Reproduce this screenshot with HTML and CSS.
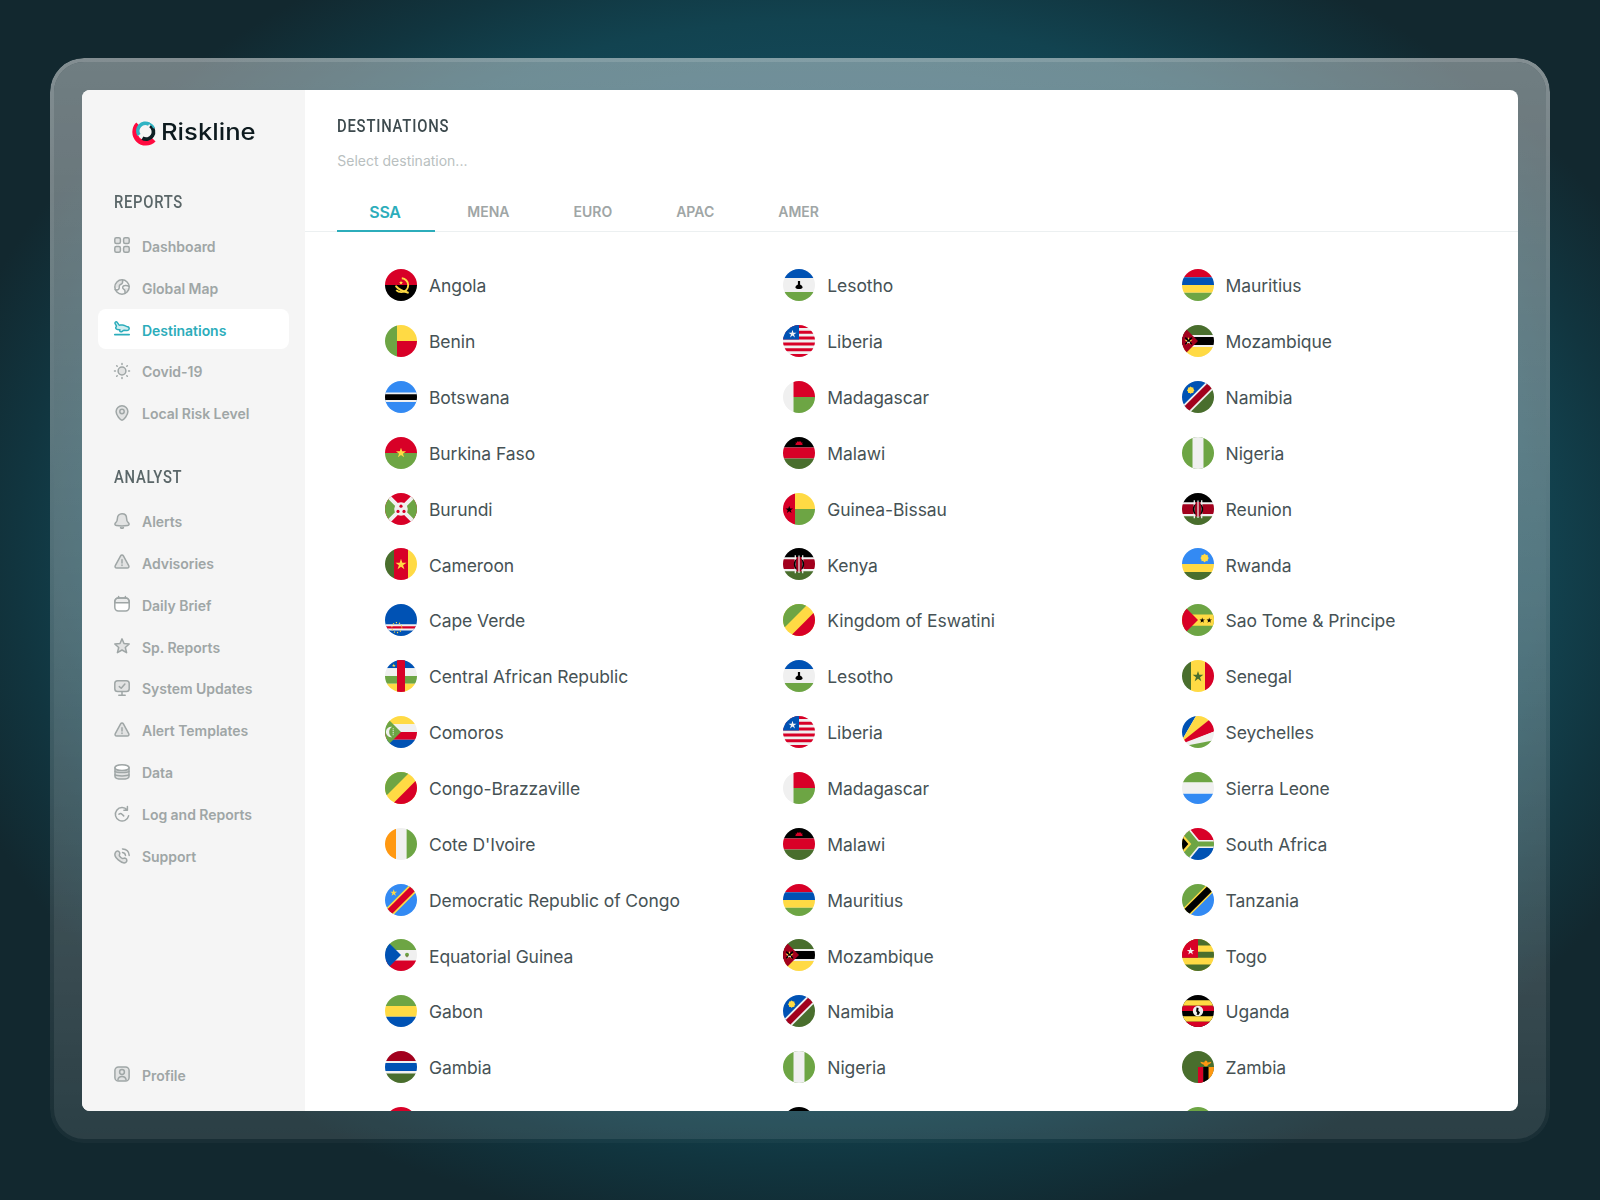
FILE: index.html
```html
<!DOCTYPE html>
<html lang="en">
<head>
<meta charset="utf-8">
<title>Riskline – Destinations</title>
<link rel="stylesheet" href="styles.css">
</head>
<body>
<svg class="sprite" width="0" height="0" aria-hidden="true">
  <defs>
    <polygon id="star" points="0,-1 .225,-.309 .951,-.309 .363,.118 .588,.809 0,.382 -.588,.809 -.363,.118 -.951,-.309 -.225,-.309"/>
    <g id="sun"><circle r=".78"/><path d="M0-1 .25-.6.7-.7.6-.25 1 0 .6.25.7.7.25.6 0 1-.25.6-.7.7-.6.25-1 0-.6-.25-.7-.7-.25-.6z"/></g>

    <symbol id="f-angola" viewBox="0 0 32 32"><path fill="#d80027" d="M0 0h32v16H0z"/><path fill="#000" d="M0 16h32v16H0z"/><g fill="none" stroke="#ffda44"><path stroke-width="1.900" d="M16.800 9.300c3.600.3 6.400 3.200 6.400 6.900 0 3.800-3 6.900-6.900 6.900-2 0-3.800-.7-5.100-2"/><path stroke-width="2.100" stroke-linecap="round" d="M11.200 17.300c2.500 3 6 4.600 11.600 6.300"/></g><use href="#star" fill="#ffda44" transform="translate(16 13.800) scale(2.200)"/></symbol>
    <symbol id="f-benin" viewBox="0 0 32 32"><path fill="#6da544" d="M0 0h12v32H0z"/><path fill="#ffda44" d="M12 0h20v16H12z"/><path fill="#d80027" d="M12 16h20v16H12z"/></symbol>
    <symbol id="f-botswana" viewBox="0 0 32 32"><path fill="#338af3" d="M0 0h32v32H0z"/><path fill="#f0f0f0" d="M0 11.400h32v9.600H0z"/><path fill="#000" d="M0 13.300h32v5.800H0z"/></symbol>
    <symbol id="f-burkina" viewBox="0 0 32 32"><path fill="#d80027" d="M0 0h32v16H0z"/><path fill="#6da544" d="M0 16h32v16H0z"/><use href="#star" fill="#ffda44" transform="translate(16 16) scale(5.300)"/></symbol>
    <symbol id="f-burundi" viewBox="0 0 32 32"><path fill="#d80027" d="M0 0h32v32H0z"/><path fill="#6da544" d="M0 0l16 16L0 32zM32 0L16 16l16 16z"/><path stroke="#f0f0f0" stroke-width="4" d="M0 0l32 32M32 0L0 32"/><circle cx="16" cy="16" r="6.800" fill="#f0f0f0"/><g fill="#d80027"><circle cx="16" cy="13.200" r="1.600"/><circle cx="13" cy="18.400" r="1.600"/><circle cx="19" cy="18.400" r="1.600"/></g></symbol>
    <symbol id="f-cameroon" viewBox="0 0 32 32"><path fill="#496e2d" d="M0 0h9v32H0z"/><path fill="#d80027" d="M9 0h14v32H9z"/><path fill="#ffda44" d="M23 0h9v32h-9z"/><use href="#star" fill="#ffda44" transform="translate(16 16.600) scale(5.800)"/></symbol>
    <symbol id="f-capeverde" viewBox="0 0 32 32"><path fill="#0052b4" d="M0 0h32v32H0z"/><path fill="#f0f0f0" d="M0 20.200h32v6.400H0z"/><path fill="#d80027" d="M0 22.200h32v2.300H0z"/><circle cx="11.800" cy="23.600" r="5" fill="none" stroke="#ffda44" stroke-width="1.200" stroke-dasharray="1.200 1.940"/></symbol>
    <symbol id="f-car" viewBox="0 0 32 32"><path fill="#0052b4" d="M0 0h32v8.300H0z"/><path fill="#f0f0f0" d="M0 8.300h32V16H0z"/><path fill="#6da544" d="M0 16h32v7.700H0z"/><path fill="#ffda44" d="M0 23.700h32V32H0z"/><path fill="#d80027" d="M12 0h8v32h-8z"/><use href="#star" fill="#ffda44" transform="translate(8.800 5.600) scale(2)"/></symbol>
    <symbol id="f-comoros" viewBox="0 0 32 32"><path fill="#ffda44" d="M0 0h32v8.300H0z"/><path fill="#f0f0f0" d="M0 8.300h32V16H0z"/><path fill="#d80027" d="M0 16h32v7.700H0z"/><path fill="#0052b4" d="M0 23.700h32V32H0z"/><path fill="#6da544" d="M0 0l16 16L0 32z"/><path fill="#f0f0f0" d="M7.200 10.800a5.300 5.300 0 1 0 0 10.400 6 6 0 0 1 0-10.400z"/><path stroke="#f0f0f0" stroke-dasharray="1 .8" d="M8.200 12.300v7.400"/></symbol>
    <symbol id="f-congo" viewBox="0 0 32 32"><path fill="#ffda44" d="M0 0h32v32H0z"/><path fill="#6da544" d="M0 0h25L0 25z"/><path fill="#d80027" d="M32 7.600V32H7.600z"/></symbol>
    <symbol id="f-cote" viewBox="0 0 32 32"><path fill="#ff9811" d="M0 0h11v32H0z"/><path fill="#f0f0f0" d="M11 0h10.600v32H11z"/><path fill="#6da544" d="M21.600 0H32v32H21.600z"/></symbol>
    <symbol id="f-drc" viewBox="0 0 32 32"><path fill="#338af3" d="M0 0h32v32H0z"/><path stroke="#ffda44" stroke-width="9.800" d="M-2 34.400L34.400-2"/><path stroke="#d80027" stroke-width="6.400" d="M-2 34.400L34.400-2"/><use href="#star" fill="#ffda44" transform="translate(8.700 8.800) scale(3.600)"/></symbol>
    <symbol id="f-eqguinea" viewBox="0 0 32 32"><path fill="#6da544" d="M0 0h32v11H0z"/><path fill="#f0f0f0" d="M0 11h32v10.600H0z"/><path fill="#d80027" d="M0 21.600h32V32H0z"/><path fill="#0052b4" d="M0 0l16 16L0 32z"/><circle cx="22" cy="15.700" r="2" fill="#6da544"/><path fill="#786145" d="M21.500 16h1v2.200h-1z"/></symbol>
    <symbol id="f-gabon" viewBox="0 0 32 32"><path fill="#6da544" d="M0 0h32v11H0z"/><path fill="#ffda44" d="M0 11h32v10.800H0z"/><path fill="#0052b4" d="M0 21.800h32V32H0z"/></symbol>
    <symbol id="f-gambia" viewBox="0 0 32 32"><path fill="#f0f0f0" d="M0 0h32v32H0z"/><path fill="#a2001d" d="M0 0h32v10H0z"/><path fill="#0052b4" d="M0 12.100h32v8H0z"/><path fill="#496e2d" d="M0 22.600h32V32H0z"/></symbol>
    <symbol id="f-lesotho" viewBox="0 0 32 32"><path fill="#f0f0f0" d="M0 0h32v32H0z"/><path fill="#0052b4" d="M0 0h32v9H0z"/><path fill="#6da544" d="M0 23h32v9H0z"/><path d="M14.900 12h2.200v3.600c1.600.8 2.500 1.800 2.500 3.100-1 1.700-6.200 1.700-7.200 0 0-1.300.9-2.300 2.500-3.100z"/></symbol>
    <symbol id="f-liberia" viewBox="0 0 32 32"><path fill="#f0f0f0" d="M0 0h32v32H0z"/><path fill="#d80027" d="M0 0h32v2.900H0zM0 5.800h32v2.900H0zM0 11.600h32v2.900H0zM0 17.500h32v2.900H0zM0 23.300h32v2.900H0zM0 29.100h32V32H0z"/><path fill="#0052b4" d="M0 0h16v14.600H0z"/><use href="#star" fill="#f0f0f0" transform="translate(9.500 9) scale(4.200)"/></symbol>
    <symbol id="f-madagascar" viewBox="0 0 32 32"><path fill="#f0f0f0" d="M0 0h10.500v32H0z"/><path fill="#d80027" d="M10.500 0H32v16H10.500z"/><path fill="#6da544" d="M10.500 16H32v16H10.500z"/></symbol>
    <symbol id="f-malawi" viewBox="0 0 32 32"><path d="M0 0h32v10.500H0z"/><path fill="#d80027" d="M0 10.500h32v11.100H0z"/><path fill="#496e2d" d="M0 21.600h32V32H0z"/><path fill="#d80027" d="M12 8l1-1-.6-1.400 1.500.2.300-1.600 1.200.8.700-1.300.7 1.300 1.200-.8.300 1.600 1.500-.2L19 7l1 1z"/></symbol>
    <symbol id="f-bissau" viewBox="0 0 32 32"><path fill="#d80027" d="M0 0h12v32H0z"/><path fill="#ffda44" d="M12 0h20v16H12z"/><path fill="#6da544" d="M12 16h20v16H12z"/><use href="#star" transform="translate(6.200 16.700) scale(4)"/></symbol>
    <symbol id="f-kenya" viewBox="0 0 32 32"><path fill="#f0f0f0" d="M0 0h32v32H0z"/><path d="M0 0h32v9.300H0z"/><path fill="#a2001d" d="M0 11.300h32v9.800H0z"/><path fill="#496e2d" d="M0 23.200h32V32H0z"/><path stroke="#f0f0f0" stroke-width="1.300" d="M12.300 7.200v18M19.700 7.200v18"/><path fill="#a2001d" d="M13.500 9h5v14.500h-5z"/><path d="M13.800 10.400c-4 2.600-4 8.900 0 11.600-1.600-4-1.600-8 0-11.600zM18.200 10.400c4 2.600 4 8.900 0 11.600 1.600-4 1.600-8 0-11.600z"/><path stroke="#f0f0f0" stroke-width="1.200" d="M16 7.500v17.500"/></symbol>
    <symbol id="f-mauritius" viewBox="0 0 32 32"><path fill="#d80027" d="M0 0h32v8.300H0z"/><path fill="#0052b4" d="M0 8.300h32V16H0z"/><path fill="#ffda44" d="M0 16h32v7.800H0z"/><path fill="#6da544" d="M0 23.800h32V32H0z"/></symbol>
    <symbol id="f-mozambique" viewBox="0 0 32 32"><path fill="#f0f0f0" d="M0 0h32v32H0z"/><path fill="#496e2d" d="M0 0h32v10H0z"/><path d="M0 12h32v8H0z"/><path fill="#ffda44" d="M0 22h32v10H0z"/><path fill="#a2001d" d="M0 0l16 16L0 32z"/><use href="#star" fill="#ffda44" transform="translate(6.500 16.200) scale(4.300)"/><path stroke="#000" stroke-width="1.500" d="M3.300 12.600l6.500 6.600M9.800 12.600l-6.500 6.600"/><path stroke="#f0f0f0" d="M5 17.300h3"/></symbol>
    <symbol id="f-namibia" viewBox="0 0 32 32"><path fill="#0052b4" d="M0 0h32L0 32z"/><path fill="#496e2d" d="M32 0v32H0z"/><path stroke="#f0f0f0" stroke-width="10" d="M-2 34.400L34.400-2"/><path stroke="#a2001d" stroke-width="6.400" d="M-2 34.400L34.400-2"/><use href="#sun" fill="#ffda44" transform="translate(8.700 9.200) scale(3.900)"/></symbol>
    <symbol id="f-nigeria" viewBox="0 0 32 32"><path fill="#6da544" d="M0 0h32v32H0z"/><path fill="#f0f0f0" d="M10.500 0h11v32h-11z"/></symbol>
    <symbol id="f-rwanda" viewBox="0 0 32 32"><path fill="#338af3" d="M0 0h32v16H0z"/><path fill="#ffda44" d="M0 16h32v8H0z"/><path fill="#496e2d" d="M0 24h32v8H0z"/><use href="#sun" fill="#ffda44" transform="translate(22.600 10) scale(4.500)"/></symbol>
    <symbol id="f-saotome" viewBox="0 0 32 32"><path fill="#6da544" d="M0 0h32v32H0z"/><path fill="#ffda44" d="M0 10.500h32v11.200H0z"/><path fill="#d80027" d="M0 0l16 16L0 32z"/><use href="#star" transform="translate(20.200 16.500) scale(2.900)"/><use href="#star" transform="translate(27.200 16.500) scale(2.900)"/></symbol>
    <symbol id="f-senegal" viewBox="0 0 32 32"><path fill="#496e2d" d="M0 0h9v32H0z"/><path fill="#ffda44" d="M9 0h14v32H9z"/><path fill="#d80027" d="M23 0h9v32h-9z"/><use href="#star" fill="#496e2d" transform="translate(16 16.600) scale(5.600)"/></symbol>
    <symbol id="f-seychelles" viewBox="0 0 32 32"><path fill="#0052b4" d="M0 0h14L0 24z"/><path fill="#ffda44" d="M14 0h18L2 25l-2-1z"/><path fill="#d80027" d="M32 0v15.500L4 27l-2-3z"/><path fill="#f0f0f0" d="M32 15.500v9L6 30l-3-3.500z"/><path fill="#6da544" d="M32 24.300V32H6l-1-2.500z"/></symbol>
    <symbol id="f-sierra" viewBox="0 0 32 32"><path fill="#6da544" d="M0 0h32v10.400H0z"/><path fill="#f0f0f0" d="M0 10.400h32v11.400H0z"/><path fill="#338af3" d="M0 21.800h32V32H0z"/></symbol>
    <symbol id="f-safrica" viewBox="0 0 32 32"><path fill="#d80027" d="M0 0h32v16H0z"/><path fill="#0052b4" d="M0 16h32v16H0z"/><path fill="none" stroke="#f0f0f0" stroke-width="8.200" d="M-1-3.500L15 16h20M-1 35.500L15 16"/><path fill="none" stroke="#6da544" stroke-width="4.800" d="M-1-3.500L15 16h20M-1 35.500L15 16"/><path fill="#6da544" d="M-1 0l15 16L-1 32z"/><path fill="#ffda44" d="M0 5.500L9.300 16 0 26.500z"/><path d="M0 8.700L6.300 16 0 23.300z"/></symbol>
    <symbol id="f-tanzania" viewBox="0 0 32 32"><path fill="#6da544" d="M0 0h32L0 32z"/><path fill="#338af3" d="M32 0v32H0z"/><path stroke="#ffda44" stroke-width="9.800" d="M-2 34.400L34.400-2"/><path stroke="#000" stroke-width="6.800" d="M-2 34.400L34.400-2"/></symbol>
    <symbol id="f-togo" viewBox="0 0 32 32"><path fill="#ffda44" d="M0 0h32v32H0z"/><path fill="#496e2d" d="M0 0h32v6.400H0zM0 12.800h32v6H0zM0 25.600h32V32H0z"/><path fill="#d80027" d="M0 0h16v18.800H0z"/><use href="#star" fill="#f0f0f0" transform="translate(8.600 12.200) scale(4)"/></symbol>
    <symbol id="f-uganda" viewBox="0 0 32 32"><path d="M0 0h32v32H0z"/><path fill="#ffda44" d="M0 5.300h32v5.400H0zM0 21.300h32v5.400H0z"/><path fill="#d80027" d="M0 10.700h32V16H0zM0 26.700h32V32H0z"/><circle cx="16" cy="16" r="5.200" fill="#f0f0f0"/><path d="M14.600 12.500l2 .6-.4 2.400 1.800 2-1.600 2.500-2-.6.900-1.500-1.200-1.700z"/></symbol>
    <symbol id="f-zambia" viewBox="0 0 32 32"><path fill="#496e2d" d="M0 0h32v32H0z"/><path fill="#d80027" d="M16 16h5.500v16H16z"/><path d="M21.300 16h5.500v16h-5.500z"/><path fill="#ff9811" d="M26.600 16H32v16h-5.400zM18.300 10.800l4 .6c0-1 .7-2 1.600-2s1.600 1 1.600 2l4-.6c-.8 1.700-2 2.600-3.200 2.600-.4 1.200-1.200 1.800-2.400 1.800s-2-.6-2.400-1.800c-1.200 0-2.400-.9-3.200-2.600z"/></symbol>

    <g id="i-alert"><path class="tint" d="M6.600 1.900c.6-1.100 2.200-1.100 2.800 0l5.300 9.700c.7 1.300-.1 2.500-1.500 2.500H2.800c-1.400 0-2.200-1.200-1.500-2.500z"/><path d="M8 5.700v3.200M8 11v.4"/></g>
  </defs>
</svg>

<div class="frame">
  <div class="window">
    <aside class="sidebar">
      <div class="logo">
        <svg class="mark" viewBox="0 0 24 24" fill="none">
          <path stroke="#ff0a3f" stroke-width="5" d="M6 2.200A11 11 0 0 0 21.800 17.800"/>
          <path stroke="#0d1f24" stroke-width="3.700" d="M18.300 3.700A7.400 7.400 0 0 1 10.400 16.200"/>
          <path stroke="#2fb4c4" stroke-width="3.600" d="M7 13A7.600 7.600 0 0 1 17 2.200"/>
          <path stroke="#2fb4c4" stroke-width="2" d="M16 1.100A8.600 8.600 0 0 1 22 6.200"/>
        </svg>
        <span class="wordmark">Riskline</span>
      </div>

      <nav class="group">
        <h2 class="heading">REPORTS</h2>
        <a class="item"><svg class="icon" viewBox="0 0 16 16"><rect class="tint" x=".8" y=".8" width="5.600" height="5.600" rx="1.500"/><rect class="tint" x="9.600" y=".8" width="5.600" height="5.600" rx="1.500"/><rect class="tint" x=".8" y="9.600" width="5.600" height="5.600" rx="1.500"/><rect class="tint" x="9.600" y="9.600" width="5.600" height="5.600" rx="1.500"/></svg><span>Dashboard</span></a>
        <a class="item"><svg class="icon" viewBox="0 0 16 16"><path class="tint plain" d="M1 9c2-.2 4-.3 4-2s1-2 2.500-2.500L8.500 1a7.200 7.200 0 0 0-7.500 8zM15 9.500c-2-1-5-.5-5.200 1.500l1.200 3.200A7 7 0 0 0 15 9.500z"/><circle cx="8" cy="8" r="7.200"/><path d="M1.200 10.500c1.800.8 3.900.3 4-1.600.1-1.700-.4-2.800 1.300-3.400C8.300 4.900 9 4 8.600 1.100M15 7.200c-1.700-.8-5.800-1.200-6.300.8-.5 2 1.300 2.200 1.900 2.900.7.900.4 2 .4 3.300"/></svg><span>Global Map</span></a>
        <a class="item active"><svg class="icon" viewBox="0 0 16 16"><path class="tint" d="M1 2.300C.7 1 2.400.1 3.200 1.300l1.600 2.300c.3.500.8.600 1.500.5l2.200-.2c2 0 2.300 1.200 4.300 1.500 1.600.2 2.500 1.100 2.400 2.400-.1 1.200-1.100 1.700-2.400 1.600l-2.600-.1c-1.500 0-1.800 1.400-3.200 1.500-1.200.1-1.600-1-1-2C4.300 8.900 1.900 8.700 1.700 7c-.1-1 1-1.200.7-2.200z"/><path stroke-width="1.700" d="M.8 13.600h14.400"/></svg><span>Destinations</span></a>
        <a class="item"><svg class="icon" viewBox="0 0 16 16"><circle class="tint" cx="8" cy="8" r="3.900"/><path d="M8 .5v.9M8 14.600v.9M.5 8h.9M14.600 8h.9M2.700 2.700l.5.500M12.800 12.800l.5.500M2.700 13.300l.5-.5M12.800 3.200l.5-.5"/></svg><span>Covid-19</span></a>
        <a class="item"><svg class="icon" viewBox="0 0 16 16"><path class="tint" d="M8 15.200c-1.600 0-5.900-4.800-5.900-8.600a5.900 5.900 0 0 1 11.800 0c0 3.800-4.300 8.600-5.900 8.600z"/><circle cx="8" cy="6.500" r="2.200"/></svg><span>Local Risk Level</span></a>
      </nav>

      <nav class="group">
        <h2 class="heading">ANALYST</h2>
        <a class="item"><svg class="icon" viewBox="0 0 16 16"><path class="tint" d="M8 .8c2.700 0 4.600 1.900 4.600 4.600 0 3 .8 3.400 2 4.500 1 1.100.5 2.500-.9 2.600-3.600.6-7.800.6-11.400 0-1.400-.1-1.900-1.500-.9-2.600 1.200-1.100 2-1.500 2-4.500C3.400 2.700 5.300.8 8 .8z"/><path stroke-width="1.800" d="M6.700 14.700c.8.500 1.800.5 2.600 0"/></svg><span>Alerts</span></a>
        <a class="item"><svg class="icon" viewBox="0 0 16 16"><use href="#i-alert"/></svg><span>Advisories</span></a>
        <a class="item"><svg class="icon" viewBox="0 0 16 16"><rect class="paper" x=".8" y="1.900" width="14.400" height="13" rx="3.600"/><path class="tint" d="M.8 6.800V5.500c0-2 1.600-3.600 3.600-3.600h7.200c2 0 3.600 1.600 3.600 3.600v1.300z"/><path d="M4.600.5v1.600M11.400.5v1.600"/></svg><span>Daily Brief</span></a>
        <a class="item"><svg class="icon" viewBox="0 0 16 16"><path class="tint" d="M8 .9l2 4.600 5.200.5-3.900 3.500 1.300 5.200L8 12l-4.600 2.700 1.300-5.200L.8 6 6 5.500z"/></svg><span>Sp. Reports</span></a>
        <a class="item"><svg class="icon" viewBox="0 0 16 16"><rect class="tint" x=".8" y=".8" width="14.400" height="10.800" rx="2.800"/><path d="M5.300 6.600l1.900 1.600L10.900 4M8 12v3M4.800 15.200h6.400"/></svg><span>System Updates</span></a>
        <a class="item"><svg class="icon" viewBox="0 0 16 16"><use href="#i-alert"/></svg><span>Alert Templates</span></a>
        <a class="item"><svg class="icon" viewBox="0 0 16 16"><path class="tint" d="M1 3.600v8.800c0 1.500 3 2.700 7 2.700s7-1.200 7-2.700V3.600z"/><ellipse class="paper" cx="8" cy="3.700" rx="7" ry="2.900"/><path d="M1 7.200c1.500 1.700 12.500 1.700 14 0M1 10.900c1.500 1.300 12.500 1.300 14 0"/></svg><span>Data</span></a>
        <a class="item"><svg class="icon" viewBox="0 0 16 16"><path d="M13.200 4A6.700 6.700 0 1 0 14.600 9.800M13.400.6v3.600H9.900M5 8.200c1.200-.9 2.300-.7 3 .1l1.700 1.600"/></svg><span>Log and Reports</span></a>
        <a class="item"><svg class="icon" viewBox="0 0 16 16"><path class="tint" d="M1.500 4.300C2.600 2.600 4.600 2.800 5.500 4.300c.8 1.400-.2 2.200-.2 3 0 1 2.300 3.300 3.300 3.300.9 0 1.700-1 3-.2 1.500.9 1.800 2.800.2 4C8.600 16.600-1.600 9 1.500 4.300z"/><path d="M8.500 4.500c1.600.2 2.800 1.300 3 3M8.500.9c3.900.2 6.500 2.800 6.700 6.500"/></svg><span>Support</span></a>
      </nav>

      <nav class="group bottom">
        <a class="item"><svg class="icon" viewBox="0 0 16 16"><rect class="tint" x=".9" y=".9" width="14.200" height="14.200" rx="3.600"/><circle cx="8" cy="6" r="2.400"/><path d="M3.900 13.800c.4-2.600 2-3.400 4.100-3.400s3.700.8 4.100 3.400"/></svg><span>Profile</span></a>
      </nav>
    </aside>

    <main class="main">
      <header class="top">
        <h1 class="title">DESTINATIONS</h1>
        <div class="search">Select destination...</div>
        <div class="tabs">
          <a class="tab selected">SSA</a><a class="tab">MENA</a><a class="tab">EURO</a><a class="tab">APAC</a><a class="tab">AMER</a>
        </div>
      </header>
      <div class="columns">
        <ul class="list">
          <li><svg class="flag"><use href="#f-angola"/></svg><span>Angola</span></li>
          <li><svg class="flag"><use href="#f-benin"/></svg><span>Benin</span></li>
          <li><svg class="flag"><use href="#f-botswana"/></svg><span>Botswana</span></li>
          <li><svg class="flag"><use href="#f-burkina"/></svg><span>Burkina Faso</span></li>
          <li><svg class="flag"><use href="#f-burundi"/></svg><span>Burundi</span></li>
          <li><svg class="flag"><use href="#f-cameroon"/></svg><span>Cameroon</span></li>
          <li><svg class="flag"><use href="#f-capeverde"/></svg><span>Cape Verde</span></li>
          <li><svg class="flag"><use href="#f-car"/></svg><span>Central African Republic</span></li>
          <li><svg class="flag"><use href="#f-comoros"/></svg><span>Comoros</span></li>
          <li><svg class="flag"><use href="#f-congo"/></svg><span>Congo-Brazzaville</span></li>
          <li><svg class="flag"><use href="#f-cote"/></svg><span>Cote D'Ivoire</span></li>
          <li><svg class="flag"><use href="#f-drc"/></svg><span>Democratic Republic of Congo</span></li>
          <li><svg class="flag"><use href="#f-eqguinea"/></svg><span>Equatorial Guinea</span></li>
          <li><svg class="flag"><use href="#f-gabon"/></svg><span>Gabon</span></li>
          <li><svg class="flag"><use href="#f-gambia"/></svg><span>Gambia</span></li>
          <li><svg class="flag"><use href="#f-burkina"/></svg></li>
        </ul>
        <ul class="list">
          <li><svg class="flag"><use href="#f-lesotho"/></svg><span>Lesotho</span></li>
          <li><svg class="flag"><use href="#f-liberia"/></svg><span>Liberia</span></li>
          <li><svg class="flag"><use href="#f-madagascar"/></svg><span>Madagascar</span></li>
          <li><svg class="flag"><use href="#f-malawi"/></svg><span>Malawi</span></li>
          <li><svg class="flag"><use href="#f-bissau"/></svg><span>Guinea-Bissau</span></li>
          <li><svg class="flag"><use href="#f-kenya"/></svg><span>Kenya</span></li>
          <li><svg class="flag"><use href="#f-congo"/></svg><span>Kingdom of Eswatini</span></li>
          <li><svg class="flag"><use href="#f-lesotho"/></svg><span>Lesotho</span></li>
          <li><svg class="flag"><use href="#f-liberia"/></svg><span>Liberia</span></li>
          <li><svg class="flag"><use href="#f-madagascar"/></svg><span>Madagascar</span></li>
          <li><svg class="flag"><use href="#f-malawi"/></svg><span>Malawi</span></li>
          <li><svg class="flag"><use href="#f-mauritius"/></svg><span>Mauritius</span></li>
          <li><svg class="flag"><use href="#f-mozambique"/></svg><span>Mozambique</span></li>
          <li><svg class="flag"><use href="#f-namibia"/></svg><span>Namibia</span></li>
          <li><svg class="flag"><use href="#f-nigeria"/></svg><span>Nigeria</span></li>
          <li><svg class="flag"><use href="#f-kenya"/></svg></li>
        </ul>
        <ul class="list">
          <li><svg class="flag"><use href="#f-mauritius"/></svg><span>Mauritius</span></li>
          <li><svg class="flag"><use href="#f-mozambique"/></svg><span>Mozambique</span></li>
          <li><svg class="flag"><use href="#f-namibia"/></svg><span>Namibia</span></li>
          <li><svg class="flag"><use href="#f-nigeria"/></svg><span>Nigeria</span></li>
          <li><svg class="flag"><use href="#f-kenya"/></svg><span>Reunion</span></li>
          <li><svg class="flag"><use href="#f-rwanda"/></svg><span>Rwanda</span></li>
          <li><svg class="flag"><use href="#f-saotome"/></svg><span>Sao Tome &amp; Principe</span></li>
          <li><svg class="flag"><use href="#f-senegal"/></svg><span>Senegal</span></li>
          <li><svg class="flag"><use href="#f-seychelles"/></svg><span>Seychelles</span></li>
          <li><svg class="flag"><use href="#f-sierra"/></svg><span>Sierra Leone</span></li>
          <li><svg class="flag"><use href="#f-safrica"/></svg><span>South Africa</span></li>
          <li><svg class="flag"><use href="#f-tanzania"/></svg><span>Tanzania</span></li>
          <li><svg class="flag"><use href="#f-togo"/></svg><span>Togo</span></li>
          <li><svg class="flag"><use href="#f-uganda"/></svg><span>Uganda</span></li>
          <li><svg class="flag"><use href="#f-zambia"/></svg><span>Zambia</span></li>
          <li><svg class="flag"><use href="#f-gabon"/></svg></li>
        </ul>
      </div>
    </main>
  </div>
</div>
</body>
</html>
```
FILE: styles.css
```css
* { box-sizing: border-box; }

body {
  margin: 0;
  width: 1600px;
  height: 1200px;
  overflow: hidden;
  padding: 58px 50px 0;
  font-family: Inter, "Liberation Sans", sans-serif;
  background: radial-gradient(ellipse 850px 640px at 51.5% 46.5%, #144d59 0%, #14495a 70%, #124350 84%, #11353f 95%, #12282f 107%);
}

.sprite { position: absolute; }

/* translucent bezel */
.frame {
  position: relative;
  width: 1500px;
  height: 1085px;
  padding: 28px;
  border: 4px solid transparent;
  border-radius: 34px;
  background: linear-gradient(180deg, rgba(255,255,255,.4), rgba(255,255,255,.28) 50%, rgba(255,255,255,.11)) padding-box;
}
.frame::before {
  content: "";
  position: absolute;
  inset: -4px;
  padding: 4px;
  border-radius: 34px;
  background: linear-gradient(180deg, rgba(255,255,255,.48), rgba(255,255,255,.25) 50%, rgba(255,255,255,.03));
  mask: linear-gradient(#000 0 0) content-box exclude, linear-gradient(#000 0 0);
}

.window {
  display: flex;
  width: 1436px;
  height: 1020.700px;
  border-radius: 8px;
  overflow: hidden;
  background: #fff;
}

/* sidebar */
.sidebar {
  display: flex;
  flex-direction: column;
  flex: none;
  width: 223.300px;
  padding: 32px 16px 16.300px;
  background: #f5f5f5;
}
.logo { display: flex; align-items: center; height: 24px; margin-left: 34px; gap: 5px; }
.mark { width: 24px; height: 24px; overflow: visible; }
.wordmark {
  padding-bottom: 4px;
  font-size: 22.500px;
  font-weight: 550;
  line-height: 24px;
  color: #0d1a1e;
  transform: scaleX(1.14);
  transform-origin: 0 50%;
}

.group { display: flex; flex-direction: column; gap: 1.900px; margin-top: 39px; }
.group + .group { margin-top: 27px; }
.group.bottom { margin-top: auto; }
.heading {
  margin: 0 0 4.600px 16px;
  padding-top: 4px;
  height: 34px;
  font: 500 18.500px/26px Roboto, "Liberation Sans", sans-serif;
  letter-spacing: .9px;
  color: #5a6668;
  transform: scaleX(.8);
  transform-origin: 0 50%;
}
.item {
  display: flex;
  align-items: center;
  gap: 12px;
  height: 40px;
  padding-left: 16px;
  border-radius: 8px;
  font-size: 14px;
  font-weight: 600;
  letter-spacing: -.03px;
  color: #9fa6a6;
}
.item span { padding-top: 1.600px; }
.item.active { background: #fff; color: #2cadbb; }
.icon {
  width: 16px;
  height: 16px;
  overflow: visible;
  fill: none;
  stroke: currentColor;
  stroke-width: 1.500;
  stroke-linecap: round;
  stroke-linejoin: round;
}
.tint { fill: currentColor; fill-opacity: .22; }
.plain { stroke: none; }
.paper { fill: #fff; }

/* content */
.main { flex: 1; overflow: hidden; }
.top { height: 142px; padding: 26px 32px 0; border-bottom: 1.500px solid #ecf0f1; }
.title {
  margin: 0;
  font: 500 18.500px/20px Roboto, "Liberation Sans", sans-serif;
  letter-spacing: 1px;
  color: #3d4a4e;
  transform: scaleX(.8);
  transform-origin: 0 50%;
}
.search { margin-top: 15px; font-size: 14px; line-height: 20px; color: #b9bfbf; }
.tabs { display: flex; margin-top: 21px; height: 40px; }
.tab { padding: 0 32px; font-size: 14px; font-weight: 600; line-height: 39px; color: #9fa6a6; }
.tab.selected { width: 98px; font-size: 16px; line-height: 41px; letter-spacing: -.3px; color: #2cadbb; border-bottom: 2.500px solid #2cadbb; }

.columns { display: grid; grid-template-columns: repeat(3, 398.300px); padding: 25.300px 0 0 79.700px; }
.list { list-style: none; margin: 0; padding: 0; }
.list li {
  display: flex;
  align-items: center;
  gap: 12px;
  height: 55.850px;
  font-size: 17.500px;
  letter-spacing: -.08px;
  color: #465255;
}
.list span { padding-top: 1.400px; }
.flag { width: 32px; height: 32px; border-radius: 50%; }
```
